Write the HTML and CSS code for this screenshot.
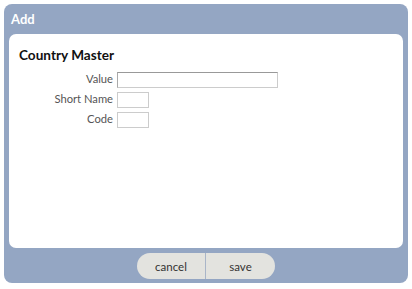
FILE: index.html
```html
<!DOCTYPE html>
<html>
<head>
<meta charset="utf-8">
<link rel="stylesheet" href="styles.css">
</head>
<body>
<div class="dialog">
  <div class="titlebar">Add</div>
  <div class="content">
    <h2 class="heading">Country Master</h2>
    <div class="form">
      <label class="lbl">Value</label><input class="inp wide" type="text">
      <label class="lbl">Short Name</label><input class="inp short" type="text">
      <label class="lbl">Code</label><input class="inp short" type="text">
    </div>
  </div>
  <div class="footer">
    <div class="btns">
      <button class="btn left">cancel</button><button class="btn right">save</button>
    </div>
  </div>
</div>
</body>
</html>
```
FILE: styles.css
```css
html, body { margin: 0; padding: 0; background: #fff; }
body { padding: 4px; font-family: Lato, "Noto Sans", sans-serif; }
.dialog {
  width: 404px;
  height: 279px;
  background: #94a6c3;
  border-radius: 8px;
  padding: 0 5px;
  box-sizing: border-box;
  display: flex;
  flex-direction: column;
}
.titlebar {
  height: 30px;
  color: #fff;
  font-weight: bold;
  font-size: 13px;
  line-height: 15px;
  padding: 8px 0 0 2px;
  box-sizing: border-box;
}
.content {
  background: #fff;
  border-radius: 7px;
  height: 214px;
  padding: 11px 10px 0 10px;
  box-sizing: border-box;
}
.heading {
  margin: 0 0 7px 0;
  font-size: 13.6px;
  line-height: 20px;
  font-weight: bold;
  color: #111;
}
.form {
  display: grid;
  grid-template-columns: 94px auto;
  column-gap: 4px;
  row-gap: 4px;
  align-items: center;
  justify-items: start;
}
.lbl {
  justify-self: end;
  font-size: 11.2px;
  color: #555;
  padding-bottom: 3px;
}
.inp {
  height: 16px;
  box-sizing: border-box;
  border: 1px solid #ccc;
  padding: 0;
  margin: 0;
  background: #fff;
}
.wide { width: 161px; border-top-color: #999; border-left-color: #aaa; }
.short { width: 32px; }
.footer {
  flex: 1;
  display: flex;
  justify-content: center;
  align-items: center;
  padding-top: 1px;
}
.btns { display: flex; }
.btn {
  width: 69px;
  height: 26px;
  border: none;
  background: #e3e3df;
  font-family: Lato, "Noto Sans", sans-serif;
  font-size: 11.5px;
  color: #333;
  padding: 0;
  margin: 0;
}
.left { border-radius: 13px 0 0 13px; border-right: 1px solid #a9b5c8; }
.right { border-radius: 0 13px 13px 0; }
```
